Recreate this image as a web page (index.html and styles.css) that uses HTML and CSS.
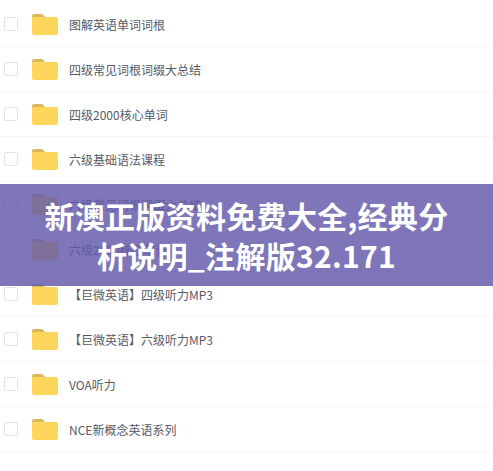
FILE: index.html
```html
<!DOCTYPE html>
<html lang="zh-CN">
<head>
<meta charset="utf-8">
<title>文件列表</title>
<link rel="stylesheet" href="styles.css">
</head>
<body>
<svg class="defs" width="0" height="0" aria-hidden="true">
  <symbol id="folder" viewBox="0 0 26 21">
    <path fill="#d9b95c" d="M0 2a2 2 0 0 1 2-2h7.5a2 2 0 0 1 1.6.8L13 3H3v3H0z"/>
    <path fill="#ffd65c" d="M0 4.5a1.5 1.5 0 0 1 1.5-1.5H24.500a1.500 1.500 0 0 1 1.500 1.500V19a2 2 0 0 1-2 2H2a2 2 0 0 1-2-2z"/>
  </symbol>
</svg>
<ul class="list">
  <li class="row"><span class="check"></span><svg class="folder"><use href="#folder"/></svg><span class="name">图解英语单词词根</span></li>
  <li class="row"><span class="check"></span><svg class="folder"><use href="#folder"/></svg><span class="name">四级常见词根词缀大总结</span></li>
  <li class="row"><span class="check"></span><svg class="folder"><use href="#folder"/></svg><span class="name">四级2000核心单词</span></li>
  <li class="row"><span class="check"></span><svg class="folder"><use href="#folder"/></svg><span class="name">六级基础语法课程</span></li>
  <li class="row"><span class="check"></span><svg class="folder"><use href="#folder"/></svg><span class="name">六级常见词根词缀大总结</span></li>
  <li class="row"><span class="check"></span><svg class="folder"><use href="#folder"/></svg><span class="name">六级2000核心单词</span></li>
  <li class="row"><span class="check"></span><svg class="folder"><use href="#folder"/></svg><span class="name">【巨微英语】四级听力MP3</span></li>
  <li class="row"><span class="check"></span><svg class="folder"><use href="#folder"/></svg><span class="name">【巨微英语】六级听力MP3</span></li>
  <li class="row"><span class="check"></span><svg class="folder"><use href="#folder"/></svg><span class="name">VOA听力</span></li>
  <li class="row"><span class="check"></span><svg class="folder"><use href="#folder"/></svg><span class="name">NCE新概念英语系列</span></li>
</ul>
<div class="banner"><h1 class="title">新澳正版资料免费大全,经典分析说明_注解版32.171</h1></div>
</body>
</html>
```
FILE: styles.css
```css
html, body {
  margin: 0;
  padding: 0;
  background: #fff;
}
body {
  position: relative;
  width: 493px;
  height: 471px;
  overflow: hidden;
  font-family: "Noto Sans CJK SC", "Noto Sans", sans-serif;
}
.defs {
  position: absolute;
}
.list {
  list-style: none;
  margin: 0;
  padding: 2px 0 0;
}
.row {
  display: flex;
  align-items: center;
  height: 44px;
  border-bottom: 1px solid #f5f5f7;
  padding-left: 4px;
}
.check {
  flex: none;
  width: 12px;
  height: 12px;
  border: 1px solid #e3e3e6;
  border-radius: 2px;
  background: #fff;
}
.folder {
  flex: none;
  width: 26px;
  height: 21px;
  margin-left: 14px;
}
.name {
  margin-left: 11px;
  font-size: 12px;
  color: #565a66;
  white-space: nowrap;
}
.banner {
  position: absolute;
  left: 0;
  top: 184px;
  width: 100%;
  height: 102px;
  display: flex;
  align-items: center;
  justify-content: center;
  background: rgba(98, 88, 170, 0.82);
}
.title {
  margin: 0;
  width: 410px;
  text-align: center;
  font-family: "Noto Sans CJK SC", sans-serif;
  font-size: 30px;
  line-height: 40px;
  font-weight: 700;
  color: #fff;
  letter-spacing: 0.3px;
}
```
